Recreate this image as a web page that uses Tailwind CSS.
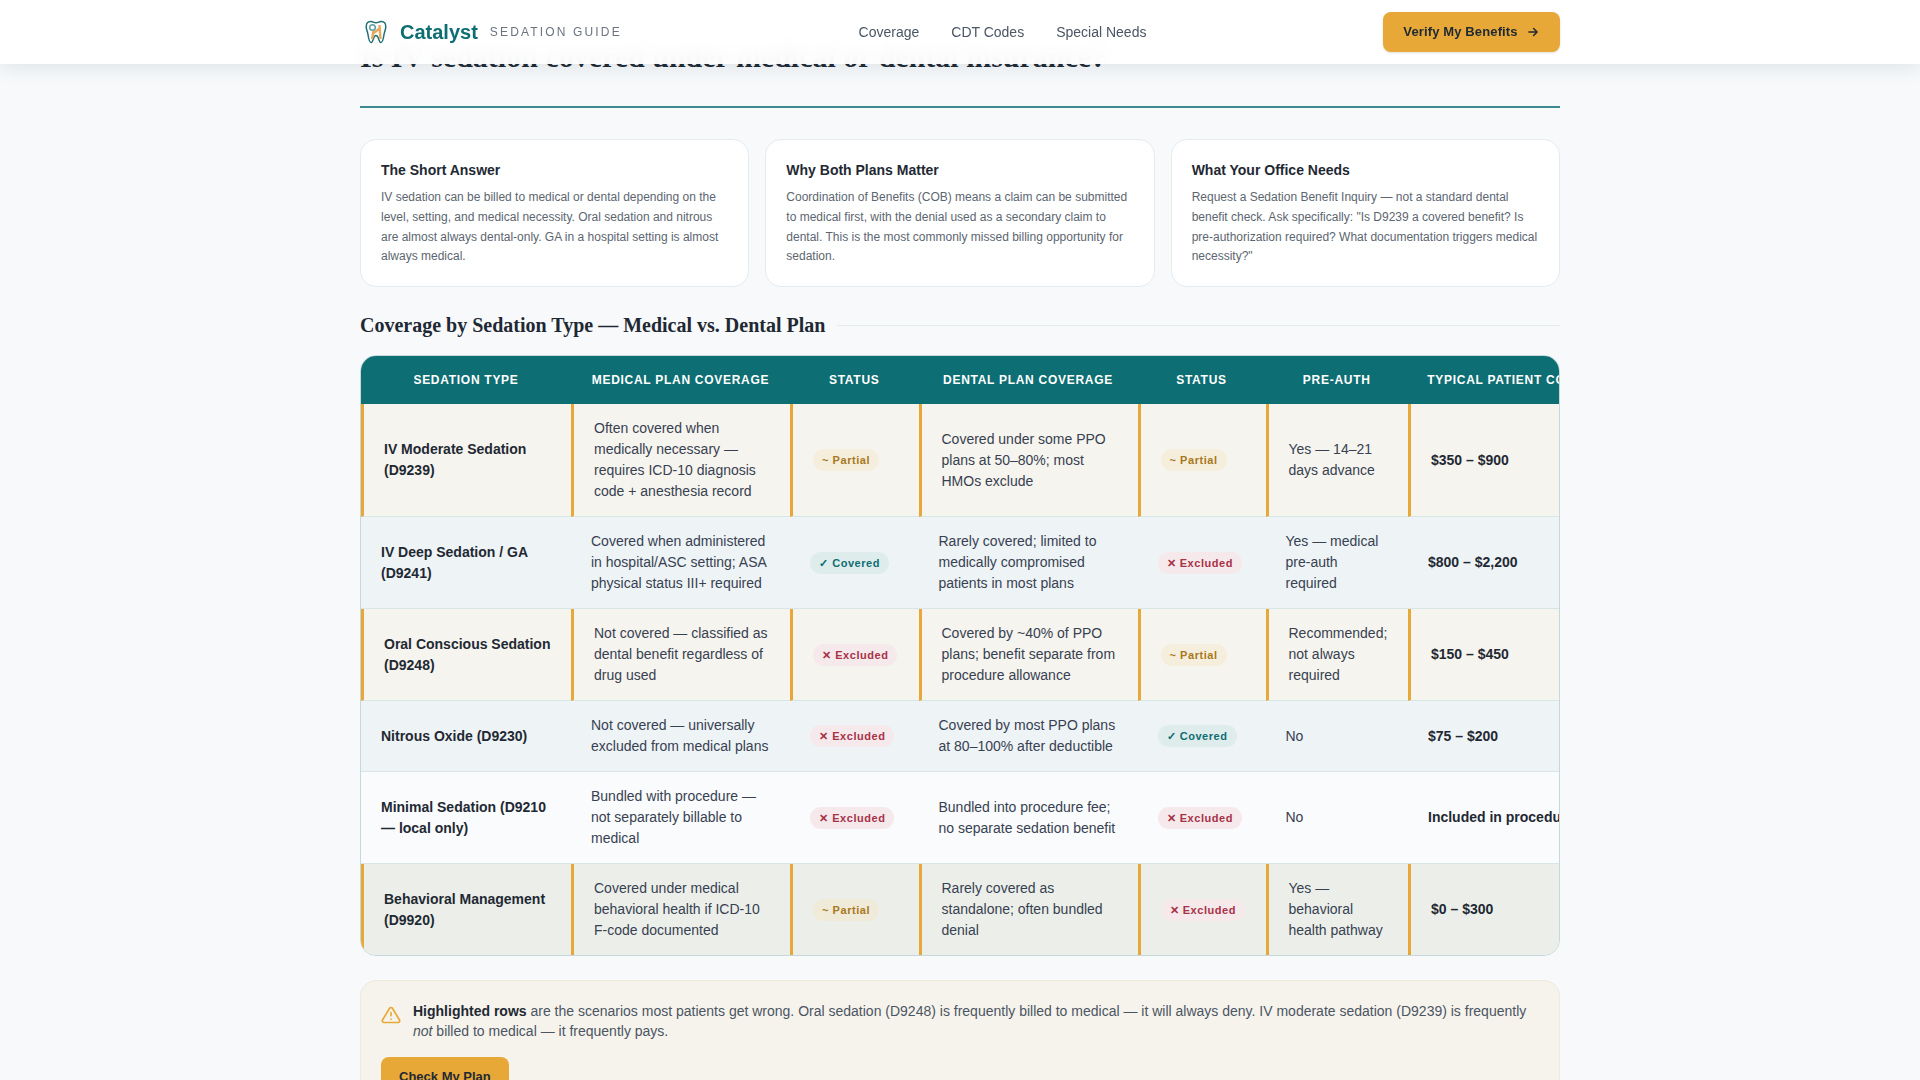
<!DOCTYPE html>
<html lang="en">
<head>
    <meta charset="UTF-8">
    <meta name="viewport" content="width=device-width, initial-scale=1.0">
    <title>Catalyst Sedation Guide</title>
    <script src="https://cdn.jsdelivr.net/npm/@tailwindcss/browser@4"></script>
</head>
<body class="h-screen overflow-hidden bg-[#f7f9fb] font-['Liberation_Sans',Arial,sans-serif] text-[#1f2933]">
    <!-- nav sits over the scrolled page -->
    <nav class="fixed top-0 inset-x-0 z-10 h-16 bg-white/95 backdrop-blur-sm shadow-[0_2px_20px_rgba(13,60,70,0.12)]">
        <div class="mx-auto w-[1200px] h-full flex items-center justify-between">
            <a class="flex items-center w-[262px]" href="#">
                <svg class="ml-[4px] w-[24px] h-[26px]" viewBox="0 0 24 26" fill="none">
                    <path d="M7 2.5C4 2.2 2 4.5 2.2 8c.2 3 1.3 4.5 1.8 7.5.4 3 1 8 3.2 8 2.3 0 1.8-7 4.8-7s2.5 7 4.8 7c2.2 0 2.8-5 3.2-8 .5-3 1.6-4.500 1.800-7.500C22 4.500 20 2.200 17 2.500c-2 .2-3 1.300-5 1.300S9 2.700 7 2.500Z" stroke="#1f6f73" stroke-width="1.500"/>
                    <path d="M8 20l1.500-8M16.500 20L15.500 6M9 14.500l6.500-5" stroke="#e9a95c" stroke-width="2.400"/>
                    <circle cx="8.500" cy="8.500" r="2.800" stroke="#5f9ea0" stroke-width="1.500"/>
                </svg>
                <span class="ml-[12px] text-[20px] font-bold text-[#0d6e73]">Catalyst</span>
                <span class="ml-[12px] text-[12px] tracking-[2.16px] text-[#6b7280]">SEDATION GUIDE</span>
            </a>
            <div class="flex items-center gap-[32px] text-[14px] text-[#4b5563]">
                <a href="#">Coverage</a>
                <a href="#">CDT Codes</a>
                <a href="#">Special Needs</a>
            </div>
            <a class="w-[177px] h-10 flex items-center justify-center gap-2 rounded-lg bg-[#e8a838] text-[13px] tracking-[0.13px] font-bold text-[#1f2933] shadow-sm" href="#">
                Verify My Benefits
                <svg class="w-3.5 h-3.5" viewBox="0 0 24 24" fill="none" stroke="currentColor" stroke-width="2.500" stroke-linecap="round" stroke-linejoin="round"><path d="M5 12h14M13 6l6 6-6 6"/></svg>
            </a>
        </div>
    </nav>

    <main class="mx-auto w-[1200px] pt-[39px]">
        <header class="pb-[31px] border-b-2 border-[#0d6e73]/80">
            <h1 class="font-['Liberation_Serif',serif] text-[30px] leading-[36px] font-bold">Is IV sedation covered under medical or dental insurance?</h1>
        </header>

        <section class="mt-[31px] grid grid-cols-3 gap-4">
            <div class="h-[148px] px-5 pt-[20px] bg-white border border-[#e4ebef] rounded-2xl">
                <h3 class="text-[14px] leading-[20px] font-bold mb-[8px]">The Short Answer</h3>
                <p class="text-[12px] leading-[19.8px] text-[#5c6670]">IV sedation can be billed to medical or dental depending on the level, setting, and medical necessity. Oral sedation and nitrous are almost always dental-only. GA in a hospital setting is almost always medical.</p>
            </div>
            <div class="h-[148px] px-5 pt-[20px] bg-white border border-[#e4ebef] rounded-2xl">
                <h3 class="text-[14px] leading-[20px] font-bold mb-[8px]">Why Both Plans Matter</h3>
                <p class="text-[12px] leading-[19.8px] text-[#5c6670]">Coordination of Benefits (COB) means a claim can be submitted to medical first, with the denial used as a secondary claim to dental. This is the most commonly missed billing opportunity for sedation.</p>
            </div>
            <div class="h-[148px] px-5 pt-[20px] bg-white border border-[#e4ebef] rounded-2xl">
                <h3 class="text-[14px] leading-[20px] font-bold mb-[8px]">What Your Office Needs</h3>
                <p class="text-[12px] leading-[19.8px] text-[#5c6670]">Request a Sedation Benefit Inquiry — not a standard dental benefit check. Ask specifically: "Is D9239 a covered benefit? Is pre-authorization required? What documentation triggers medical necessity?"</p>
            </div>
        </section>

        <div class="mt-[23px] flex items-center gap-3">
            <h2 class="font-['Liberation_Serif',serif] text-[20px] leading-[30px] font-bold whitespace-nowrap">Coverage by Sedation Type — Medical vs. Dental Plan</h2>
            <div class="flex-1 h-px bg-[#e4ebef]"></div>
        </div>

        <div class="mt-[15px] overflow-hidden rounded-2xl border border-[#c5d9dc]">
            <table class="w-[1240.5px] table-fixed border-separate border-spacing-0 text-[14px] leading-[21px] text-[#374151] [&_td]:px-5 [&_td]:py-3.5 [&_td]:border-b [&_td]:border-b-[#d8e5e7] [&_th]:h-[48px] [&_th]:whitespace-nowrap [&_th]:text-[12px] [&_th]:tracking-[0.72px] [&_th]:font-bold [&_th]:text-white [&_th]:bg-[#0d6e73] [&_td:first-child]:font-bold [&_td:first-child]:text-[#1f2933] [&_td:last-child]:font-bold [&_td:last-child]:text-[#1f2933] [&_td:last-child]:whitespace-nowrap">
                <colgroup>
                    <col class="w-[210px]"><col class="w-[219px]"><col class="w-[128.5px]"><col class="w-[219px]"><col class="w-[128px]"><col class="w-[142.5px]"><col class="w-[193.5px]">
                </colgroup>
                <thead>
                    <tr>
                        <th>SEDATION TYPE</th>
                        <th>MEDICAL PLAN COVERAGE</th>
                        <th>STATUS</th>
                        <th>DENTAL PLAN COVERAGE</th>
                        <th>STATUS</th>
                        <th>PRE-AUTH</th>
                        <th>TYPICAL PATIENT COST</th>
                    </tr>
                </thead>
                <tbody>
                    <tr class="bg-[#f6f4ee] [&>td]:border-l-[3px] [&>td]:border-l-[#e8a838]">
                        <td>IV Moderate Sedation (D9239)</td>
                        <td>Often covered when medically necessary — requires ICD-10 diagnosis code + anesthesia record</td>
                        <td><span class="inline-block px-[9px] rounded-full text-[11px] leading-[22px] font-bold tracking-[0.55px] whitespace-nowrap bg-[#f6eedd] text-[#a87820]">~ Partial</span></td>
                        <td>Covered under some PPO plans at 50–80%; most HMOs exclude</td>
                        <td><span class="inline-block px-[9px] rounded-full text-[11px] leading-[22px] font-bold tracking-[0.55px] whitespace-nowrap bg-[#f6eedd] text-[#a87820]">~ Partial</span></td>
                        <td>Yes — 14–21 days advance</td>
                        <td>$350 – $900</td>
                    </tr>
                    <tr class="bg-[#eef3f6]">
                        <td>IV Deep Sedation / GA (D9241)</td>
                        <td>Covered when administered in hospital/ASC setting; ASA physical status III+ required</td>
                        <td><span class="inline-block px-[9px] rounded-full text-[11px] leading-[22px] font-bold tracking-[0.55px] whitespace-nowrap bg-[#dfecec] text-[#0d6e73]">✓ Covered</span></td>
                        <td>Rarely covered; limited to medically compromised patients in most plans</td>
                        <td><span class="inline-block px-[9px] rounded-full text-[11px] leading-[22px] font-bold tracking-[0.55px] whitespace-nowrap bg-[#f5e9ec] text-[#a83246]">✕ Excluded</span></td>
                        <td>Yes — medical pre-auth required</td>
                        <td>$800 – $2,200</td>
                    </tr>
                    <tr class="bg-[#f6f4ee] [&>td]:border-l-[3px] [&>td]:border-l-[#e8a838]">
                        <td>Oral Conscious Sedation (D9248)</td>
                        <td>Not covered — classified as dental benefit regardless of drug used</td>
                        <td><span class="inline-block px-[9px] rounded-full text-[11px] leading-[22px] font-bold tracking-[0.55px] whitespace-nowrap bg-[#f5e9ec] text-[#a83246]">✕ Excluded</span></td>
                        <td>Covered by ~40% of PPO plans; benefit separate from procedure allowance</td>
                        <td><span class="inline-block px-[9px] rounded-full text-[11px] leading-[22px] font-bold tracking-[0.55px] whitespace-nowrap bg-[#f6eedd] text-[#a87820]">~ Partial</span></td>
                        <td>Recommended; not always required</td>
                        <td>$150 – $450</td>
                    </tr>
                    <tr class="bg-[#eef3f6]">
                        <td>Nitrous Oxide (D9230)</td>
                        <td>Not covered — universally excluded from medical plans</td>
                        <td><span class="inline-block px-[9px] rounded-full text-[11px] leading-[22px] font-bold tracking-[0.55px] whitespace-nowrap bg-[#f5e9ec] text-[#a83246]">✕ Excluded</span></td>
                        <td>Covered by most PPO plans at 80–100% after deductible</td>
                        <td><span class="inline-block px-[9px] rounded-full text-[11px] leading-[22px] font-bold tracking-[0.55px] whitespace-nowrap bg-[#dfecec] text-[#0d6e73]">✓ Covered</span></td>
                        <td>No</td>
                        <td>$75 – $200</td>
                    </tr>
                    <tr class="bg-[#fafbfc]">
                        <td>Minimal Sedation (D9210 — local only)</td>
                        <td>Bundled with procedure — not separately billable to medical</td>
                        <td><span class="inline-block px-[9px] rounded-full text-[11px] leading-[22px] font-bold tracking-[0.55px] whitespace-nowrap bg-[#f5e9ec] text-[#a83246]">✕ Excluded</span></td>
                        <td>Bundled into procedure fee; no separate sedation benefit</td>
                        <td><span class="inline-block px-[9px] rounded-full text-[11px] leading-[22px] font-bold tracking-[0.55px] whitespace-nowrap bg-[#f5e9ec] text-[#a83246]">✕ Excluded</span></td>
                        <td>No</td>
                        <td>Included in procedure</td>
                    </tr>
                    <tr class="bg-[#ecefe9] [&>td]:border-l-[3px] [&>td]:border-l-[#e8a838] [&>td]:border-b-0">
                        <td>Behavioral Management (D9920)</td>
                        <td>Covered under medical behavioral health if ICD-10 F-code documented</td>
                        <td><span class="inline-block px-[9px] rounded-full text-[11px] leading-[22px] font-bold tracking-[0.55px] whitespace-nowrap bg-[#f0ead9] text-[#a87820]">~ Partial</span></td>
                        <td>Rarely covered as standalone; often bundled denial</td>
                        <td><span class="inline-block px-[9px] rounded-full text-[11px] leading-[22px] font-bold tracking-[0.55px] whitespace-nowrap bg-[#f5e9ec] text-[#a83246]">✕ Excluded</span></td>
                        <td>Yes — behavioral health pathway</td>
                        <td>$0 – $300</td>
                    </tr>
                </tbody>
            </table>
        </div>

        <aside class="mt-6 px-5 pt-[20px] pb-6 bg-[#f6f3ec] border border-[#efe9da] rounded-2xl">
            <div class="flex gap-[12px]">
                <svg class="mt-[4px] w-5 h-5 shrink-0 text-[#e8a838]" viewBox="0 0 24 24" fill="none" stroke="currentColor" stroke-width="2" stroke-linecap="round" stroke-linejoin="round"><path d="M10.300 3.900 1.800 18a2 2 0 0 0 1.700 3h17a2 2 0 0 0 1.700-3L13.700 3.900a2 2 0 0 0-3.400 0Z"/><path d="M12 9v4M12 17h.01"/></svg>
                <p class="text-[14px] leading-[20px] text-[#4b5563]"><strong class="text-[#1f2933]">Highlighted rows</strong> are the scenarios most patients get wrong. Oral sedation (D9248) is frequently billed to medical — it will always deny. IV moderate sedation (D9239) is frequently <em>not</em> billed to medical — it frequently pays.</p>
            </div>
            <a class="mt-[16px] inline-block px-[18px] py-[10px] rounded-lg bg-[#e8a838] text-[13px] font-bold text-[#1f2933]" href="#">Check My Plan</a>
        </aside>
    </main>
</body>
</html>
